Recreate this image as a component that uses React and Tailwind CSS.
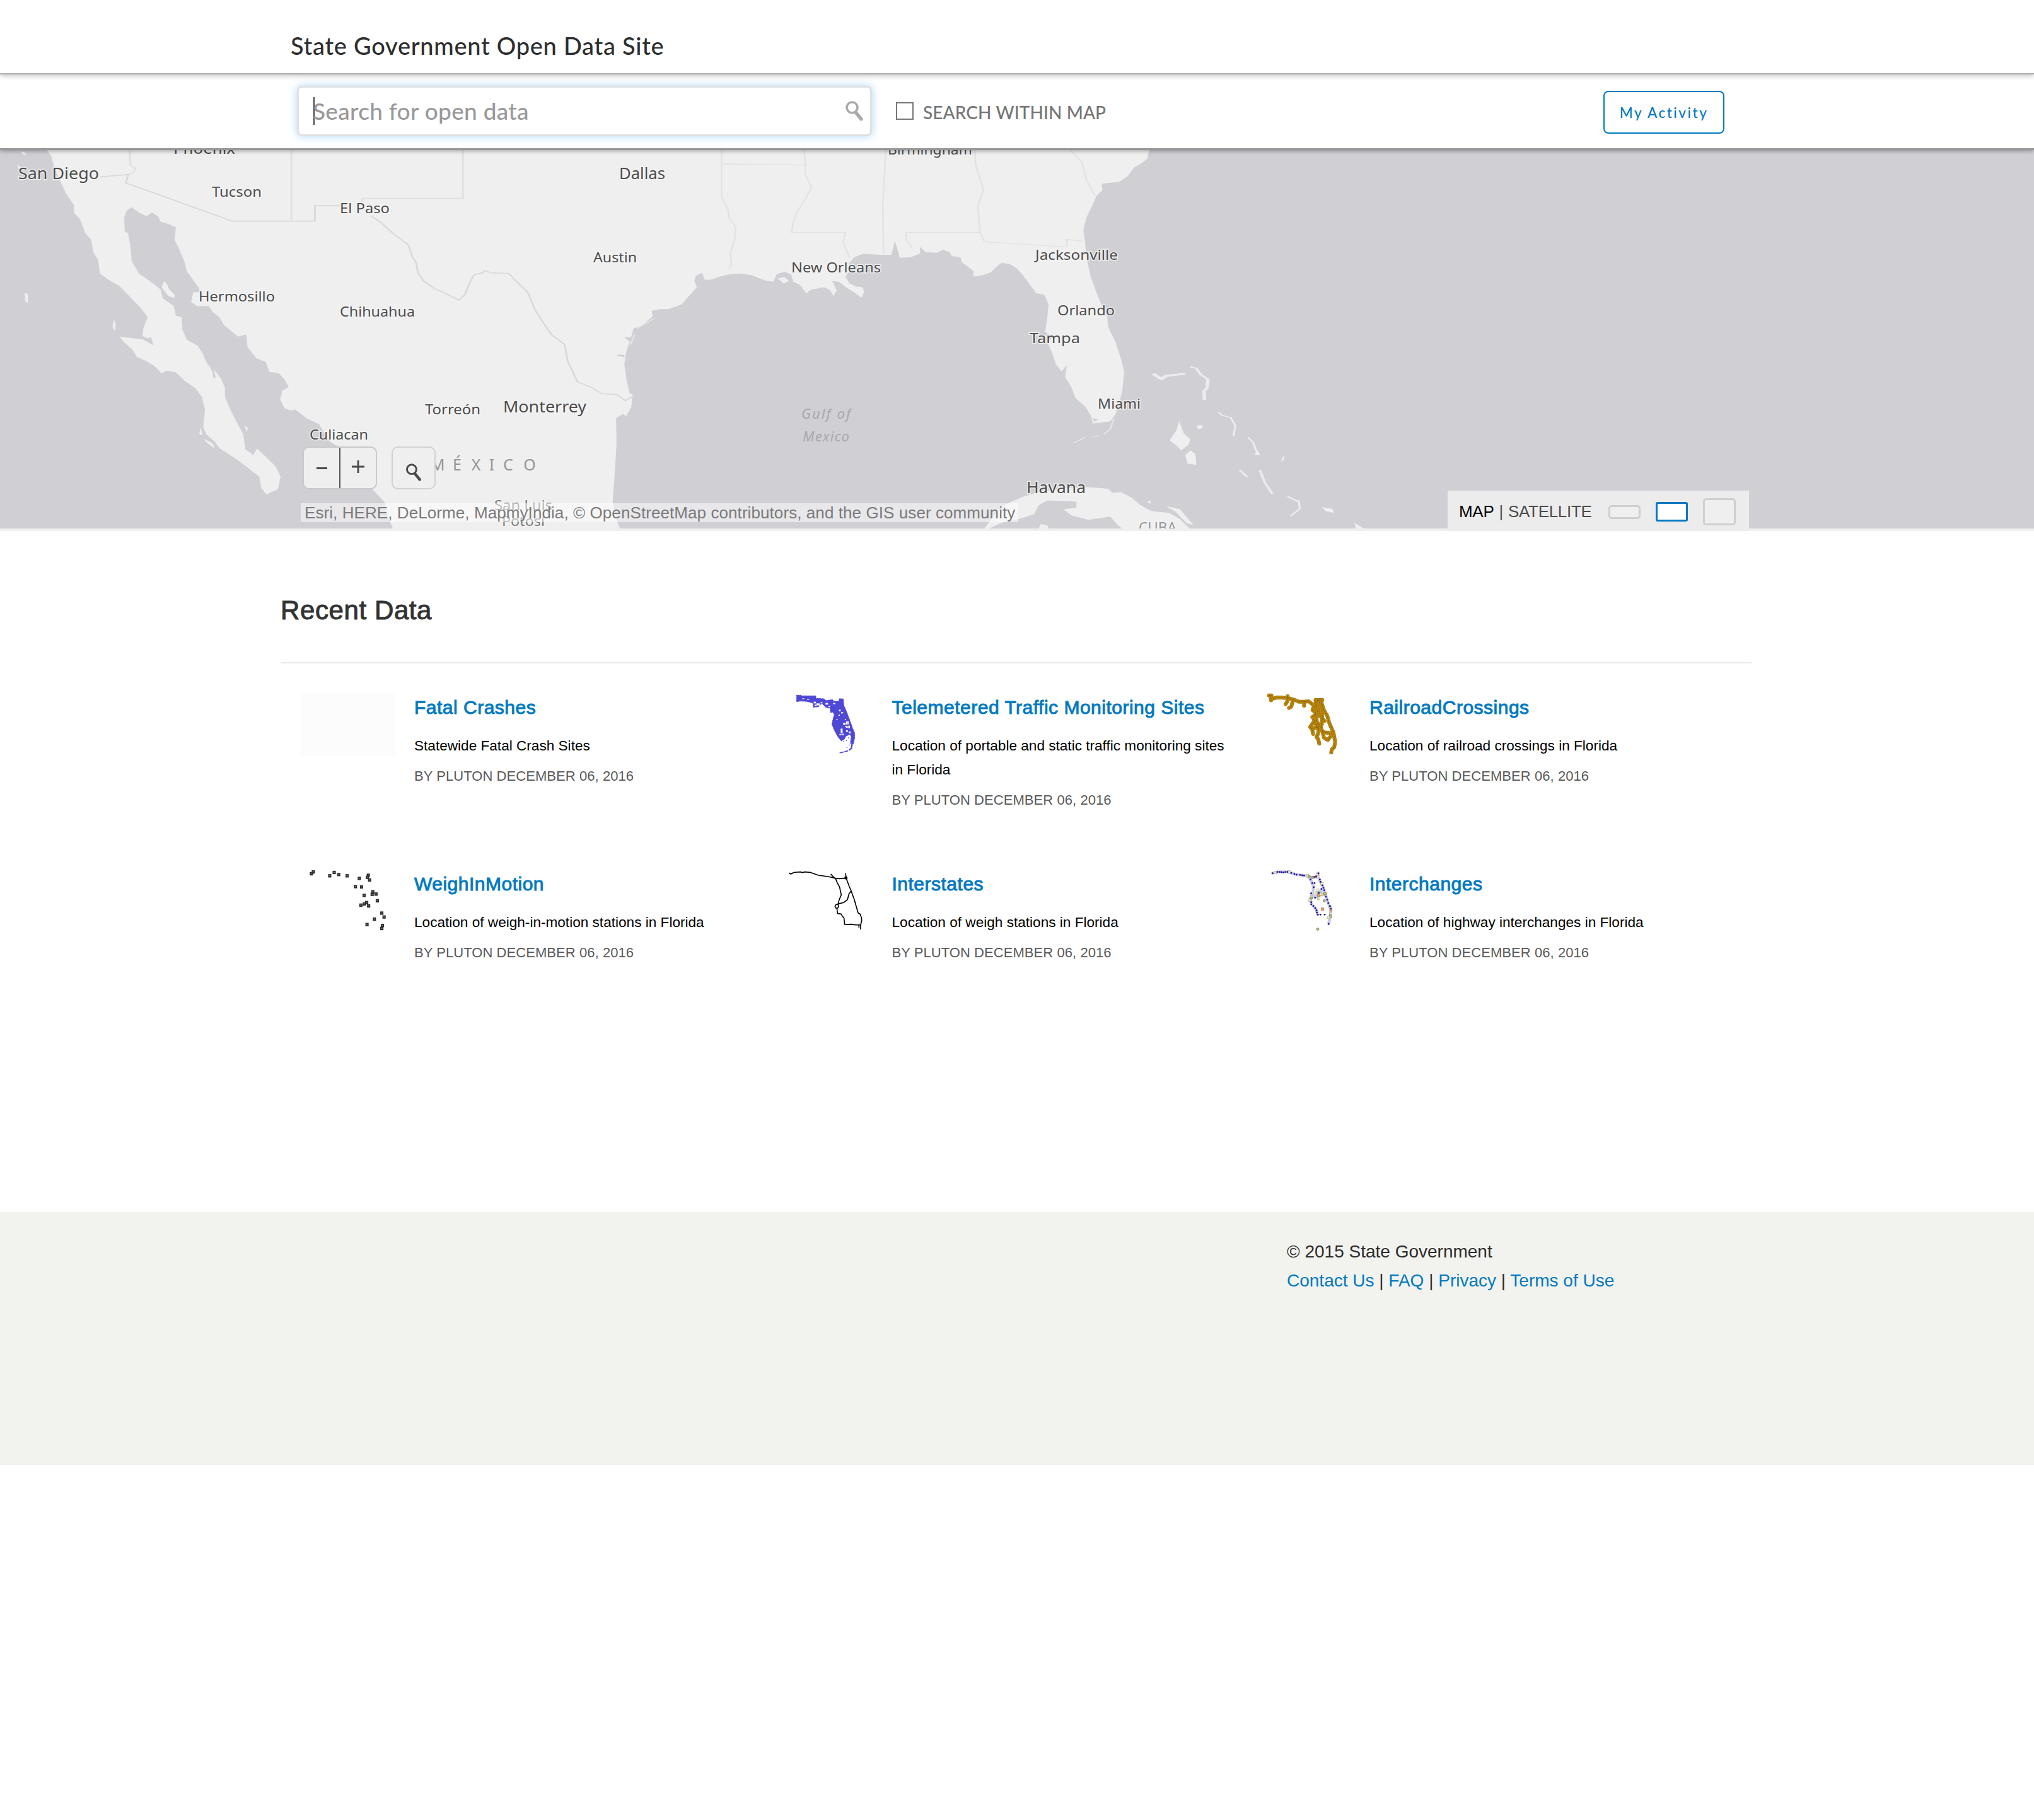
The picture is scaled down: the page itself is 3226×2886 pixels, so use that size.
import React from "react";

const CARDS = [
  { title: "Fatal Crashes", text: "Statewide Fatal Crash Sites", thumb: "blank" },
  { title: "Telemetered Traffic Monitoring Sites", text: "Location of portable and static traffic monitoring sites in Florida", thumb: "traffic" },
  { title: "RailroadCrossings", text: "Location of railroad crossings in Florida", thumb: "rail" },
  { title: "WeighInMotion", text: "Location of weigh-in-motion stations in Florida", thumb: "weigh" },
  { title: "Interstates", text: "Location of weigh stations in Florida", thumb: "interstates" },
  { title: "Interchanges", text: "Location of highway interchanges in Florida", thumb: "interchanges" },
];

// label, left, right, baseline, font size
const CITIES = [
  ["San Diego", 29, 157, 284, 26],
  ["Phoenix", 275, 373, 244, 25],
  ["Tucson", 336, 415, 312, 22],
  ["El Paso", 539, 618, 338, 22],
  ["Dallas", 982, 1055, 284, 26],
  ["Austin", 941, 1010, 416, 22],
  ["Hermosillo", 315, 436, 478, 22],
  ["Chihuahua", 539, 658, 502, 22],
  ["Torreón", 674, 762, 657, 22],
  ["Monterrey", 798, 930, 654, 26],
  ["Culiacan", 491, 584, 697, 22],
  ["Birmingham", 1408, 1542, 245, 22],
  ["New Orleans", 1255, 1397, 432, 22],
  ["Jacksonville", 1642, 1773, 412, 22],
  ["Orlando", 1677, 1768, 500, 22],
  ["Tampa", 1633, 1713, 544, 22],
  ["Miami", 1741, 1809, 648, 22],
  ["Havana", 1628, 1722, 782, 25],
];

const FADED = [
  ["San Luis", 784, 876, 809, 22, "#777777"],
  ["Potosí", 796, 864, 834, 22, "#777777"],
  ["CUBA", 1806, 1866, 844, 21, "#97979b"],
];

const WEIGH = [
  [125, 1140], [131, 1133], [182, 1148], [196, 1135], [210, 1143], [236, 1148], [274, 1158], [302, 1146], [299, 1154],
  [306, 1164], [262, 1190], [281, 1191], [316, 1210], [314, 1220], [326, 1219], [289, 1224], [330, 1245], [290, 1257],
  [297, 1252], [279, 1262], [303, 1265], [344, 1293], [351, 1308], [321, 1316], [298, 1337], [346, 1341], [344, 1353],
];

const JUNCTIONS = [
  [115, 914], [138, 908], [148, 908], [157, 909], [167, 910], [176, 908], [186, 908], [204, 913], [219, 918], [229, 921],
  [246, 922], [256, 924], [265, 925], [295, 944], [304, 961], [315, 961], [311, 981], [313, 932], [322, 930], [333, 915],
  [340, 944], [343, 955], [352, 972], [357, 984], [347, 989], [361, 995], [335, 1007], [299, 1010], [318, 1030], [369, 1026],
  [375, 1040], [380, 1056], [388, 1071], [299, 1052], [299, 1062], [309, 1070], [318, 1080], [324, 1090], [326, 1101],
  [330, 1111], [343, 1111], [363, 1111], [392, 1083], [382, 1155],
];

const YELLOW = [
  [127, 910], [194, 908], [280, 925], [328, 918], [350, 965], [330, 995], [322, 1008], [345, 1012], [356, 1016], [300, 1028],
  [291, 1042], [334, 1035], [387, 1072], [381, 1125], [391, 1108],
];

const HOLES = [
  [182, 98, 10, 8], [194, 106, 16, 10], [186, 112, 8, 8], [127, 82, 10, 4], [150, 86, 10, 3], [215, 100, 8, 6], [238, 104, 12, 8],
  [252, 118, 8, 6], [274, 104, 10, 6], [302, 136, 8, 8], [312, 148, 10, 6], [300, 160, 6, 5], [310, 226, 9, 22], [322, 198, 12, 10],
  [336, 192, 12, 14], [330, 214, 14, 8], [346, 212, 8, 12], [336, 234, 8, 8], [348, 240, 10, 8], [304, 252, 10, 5], [290, 180, 5, 6],
  [330, 180, 6, 5], [318, 250, 6, 8],
];

function Thumb({ kind }) {
  if (kind === "blank") return <div className="h-[100px] w-[150px] bg-[#fcfcfc]" />;
  if (kind === "weigh")
    return (
      <svg className="block h-[100px] w-[150px]" viewBox="92 1124.5 294 245" preserveAspectRatio="none">
        {WEIGH.map(([x, y], i) => (
          <g key={i}>
            <rect x={x - 5} y={y - 6} width="10" height="13" fill="#2b2b2b" />
            <rect x={x - 2} y={y - 1.5} width="4" height="3" fill="#8a8a8a" />
          </g>
        ))}
      </svg>
    );
  if (kind === "traffic")
    return (
      <svg className="block h-[100px] w-[150px]" viewBox="15 57 450 300">
        <path
          d="M100 67H122V70H192V82L230 84 240 92 272 88 276 96H302L303 83 323 85 325 115 340 150 355 190 367 225 376 245 377 270 370 300 356 296 360 262 352 254 335 262 328 276 312 285 295 262 280 235 268 205 275 175 280 160 272 148 262 150 260 130 240 125 222 108 212 112 206 122 180 125 178 105 150 97 120 95 100 98Z"
          fill="#4f48d6" stroke="#4f48d6" strokeWidth="3" strokeDasharray="5 3"
        />
        <path d="M366 290 361 320 350 329" fill="none" stroke="#4f48d6" strokeWidth="7" />
        <path d="M345 332 328 336M324 337 305 342" fill="none" stroke="#4f48d6" strokeWidth="5" />
        {HOLES.map(([x, y, w, h], i) => (
          <rect key={i} x={x} y={y} width={w} height={h} fill="#fff" />
        ))}
        <path d="M322 286h5M336 284h4M345 270h5M338 316h4M348 304h5M190 110h5M330 220h6M341 200h4M316 232h3" stroke="#5a52e0" strokeWidth="4" />
      </svg>
    );
  if (kind === "rail") {
    const d =
      "M98 68H110M104 70 108 92M110 85 135 78 186 80 215 88 240 98 265 98 287 96 310 115M187 72 186 95 177 110M212 90 204 122 193 128M265 98V118M319 90H352M330 90 322 115 308 128 305 138 320 150 316 164 304 171M335 90 342 120 336 145 345 170 362 190M320 100 332 165M348 100 352 190M320 160 325 185 308 198 294 218 304 232 308 252M325 190 335 215 332 250 324 266 333 278 337 298M345 95 360 140 375 165 385 200 405 245 413 290 408 315 397 325 394 340M310 180 335 235M350 185 345 225 356 243 395 248M352 240 360 270 378 280 392 262M320 205H350M305 225 345 215";
    return (
      <svg className="block h-[100px] w-[150px] overflow-visible" viewBox="36 57 450 300" fill="none" strokeLinecap="round" strokeLinejoin="round">
        <path d={d} stroke="#a2770c" strokeWidth="18" />
        <path d={d} stroke="#bb880a" strokeWidth="14" />
        <path d={d} stroke="#7a5a10" strokeWidth="3.5" strokeDasharray="2 7" />
      </svg>
    );
  }
  if (kind === "interstates")
    return (
      <svg className="block h-[100px] w-[150px] overflow-visible" viewBox="15 897 450 300" fill="none" stroke="#000" strokeWidth="5" strokeLinejoin="round">
        <path d="M64 913 73 918 85 911 103 909 118 908 128 911 140 908 165 910 185 917 205 924 250 930 285 938 305 940 335 937" />
        <path d="M263 918 275 932 286 940 293 958 305 980 309 1000 313 1017 303 1040 298 1060" />
        <path d="M333 914 337 940 350 975 360 998 375 1040 393 1103 402 1108 409 1125 410 1140 405 1160 405 1181" />
        <path d="M360 998 350 1012 342 1040 325 1053 300 1060 288 1063 283 1072 287 1080 296 1080 300 1072 297 1062" />
        <path d="M292 1080 295 1105 312 1108 318 1118 326 1128 329 1158 360 1157 380 1160 405 1160M397 1160V1173" />
        <circle cx="335" cy="936" r="5" fill="#000" />
      </svg>
    );
  return (
    <svg className="block h-[100px] w-[150px] overflow-visible" viewBox="36 897 450 300">
      <path
        d="M115 914 140 908 190 908 220 918 270 926 295 935 333 932M333 912V935L352 972 365 1010 380 1056 393 1085 390 1115 382 1155M290 930 311 980 305 1010 295 1035 300 1060 322 1085 330 1111M360 990 335 1005 318 1030 300 1010M365 1015 330 1020"
        fill="none" stroke="#c3c3e0" strokeWidth="14" strokeLinejoin="round" strokeLinecap="round" opacity=".85"
      />
      {YELLOW.map(([x, y], i) => (
        <rect key={i} x={x - 6} y={y - 6} width="12" height="12" fill="#e6efba" stroke="#8f9474" strokeWidth="1.4" />
      ))}
      {JUNCTIONS.map(([x, y], i) => (
        <circle key={i} cx={x} cy={y} r="4.2" fill="#2016a0" />
      ))}
      <g fill="#b5b77c" stroke="#5d5f40" strokeWidth="1.8">
        <circle cx="289" cy="929" r="6" />
        <circle cx="305" cy="934" r="6" />
        <circle cx="361" cy="1045" r="6" />
        <circle cx="300" cy="1032" r="6" />
        <circle cx="330" cy="1180" r="6" />
        <rect x="359" y="1005" width="12" height="12" />
        <path d="M385 1112h11v14h-6z" fillOpacity=".5" />
      </g>
      <circle cx="322" cy="930" r="5" fill="#a01c30" />
      <g fill="#e8935f" stroke="#a86a50" strokeWidth="1.6">
        <rect x="328" y="1013" width="12" height="12" />
        <rect x="347" y="1079" width="12" height="12" />
        <rect x="387" y="1086" width="10" height="9" />
      </g>
    </svg>
  );
}

function MapLabel({ item, fill }) {
  const [t, x0, x1, y, size] = item;
  return (
    <text x={x0} y={y} fontSize={size} textLength={x1 - x0} lengthAdjust="spacingAndGlyphs" fill={fill} stroke="#f6f6f6" strokeOpacity=".8" strokeWidth="3" paintOrder="stroke">
      {t}
    </text>
  );
}

function MapArt() {
  return (
    <svg className="block h-[600px] w-[3226px]" viewBox="0 238 3226 600" fontFamily="'Noto Sans', sans-serif">
      <rect x="0" y="236" width="3226" height="602" fill="#d0cfd4" />
      <g transform="translate(0 230) scale(.68878 .39541)" fill="#efefef">
        <path d="M100 0 108 20 118 45 125 90 140 150 152 195 170 240 170 270 185 300 197 355 210 380 215 430 226 460 230 515 250 540 275 565 300 610 325 655 340 690 330 735 328 765 340 775 348 770 353 803 330 780 275 768 285 790 305 820 315 850 335 865 355 885 372 915 385 905 405 912 425 945 450 975 465 1010 472 1060 468 1130 475 1160 495 1190 505 1215 545 1260 575 1300 597 1330 602 1375 613 1402 640 1380 646 1330 635 1290 615 1255 592 1217 583 1243 565 1220 560 1160 545 1110 530 1060 518 1010 518 975 510 940 495 905 485 890 478 880 465 830 455 805 430 780 420 740 418 690 405 685 400 645 375 615 370 580 345 545 320 515 303 465 300 400 295 355 287 345 286 290 292 262 303 250 320 270 337 285 350 270 365 288 370 308 385 315 405 330 402 380 412 415 425 470 430 505 440 530 457 570 462 590 445 590 440 630 455 647 480 645 490 670 505 690 515 720 535 750 548 768 567 760 570 810 590 855 612 870 620 910 642 915 655 940 665 970 650 985 645 1020 655 1055 670 1065 680 1060 705 1095 735 1120 745 1150 760 1190 785 1215 830 1320 860 1385 885 1430 895 1500 908 1550H1340V0Z" />
        <path d="M378 545 385 560 390 580 402 600 402 614 388 606 372 570Z" />
        <path d="M57 592 64 598 64 635 58 625ZM262 698 267 720 264 745 259 730ZM48 25 58 30 60 42 52 36ZM40 75 48 90 42 95Z" />
        <path d="M563 1125 571 1135 568 1152ZM462 1130 466 1165 459 1158ZM470 1178 490 1196 495 1218 474 1190Z" />
        <path d="M485 890 491 905 494 935" fill="none" stroke="#d0cfd4" strokeWidth="5" />
      </g>
      <g transform="translate(900 230) scale(.68878 .39541)" fill="#efefef">
        <path d="M-5 0V1550H124L112 1500 104 1430 108 1340 113 1200 112 1095 128 1078 135 1088 147 1050 150 1000 143 995 136 940 131 880 135 830 145 780 152 735 170 725 185 703 196 688 194 665 210 658 232 658 262 640 280 605 298 570 292 545 296 525 310 512 316 540 330 540 350 528 375 518 400 515 425 522 455 543 474 548 482 518 500 508 515 520 520 548 535 560 550 595 560 580 592 570 605 582 612 605 620 585 610 545 625 548 645 575 660 590 677 612 683 590 680 570 665 568 650 555 640 530 650 500 648 475 660 450 680 436 720 440 746 440 754 385 762 430 765 452 790 450 812 435 812 408 825 430 850 432 865 420 880 430 885 445 905 450 908 470 920 485 935 505 935 527 955 523 975 510 990 485 1000 472 1020 478 1035 495 1050 525 1065 560 1080 595 1098 600 1108 640 1105 690 1100 750 1118 770 1105 790 1115 830 1125 880 1138 908 1150 882 1146 930 1160 970 1170 1015 1193 1050 1205 1085 1210 1117 1250 1108 1262 1080 1270 1040 1278 980 1282 910 1275 860 1262 790 1245 730 1243 690 1232 650 1220 600 1205 530 1195 450 1192 390 1188 340 1195 290 1208 245 1218 205 1232 180 1230 155 1270 148 1290 125 1305 90 1320 75 1335 55 1342 0Z" />
        <path d="M955 1550 985 1480 1010 1440 1050 1410 1090 1390 1150 1375 1200 1372 1245 1378 1255 1395 1275 1392 1300 1415 1320 1445 1345 1468 1385 1475 1410 1500 1440 1550H1285L1265 1520 1250 1490 1200 1503 1160 1485 1142 1460 1172 1455 1172 1430 1105 1425 1085 1445 1075 1480 1040 1500 1000 1515Z" />
        <path d="M1083 1545 1090 1520 1105 1525 1110 1545ZM1378 1448 1410 1460 1442 1525 1425 1515 1400 1470Z" />
        <path d="M155 760 145 800M160 735 200 695M1258 1098 1250 1140 1235 1160" fill="none" stroke="#e4e4e6" strokeWidth="4" />
        <path d="M484 535 500 530 510 545 498 556Z" />
        <path d="M130 768 148 772 144 790ZM115 840 132 842 130 850 115 846ZM1208 1095 1222 1100 1214 1110Z" fill="#d0cfd4" />
        <g fill="none" stroke="#e2e2e2" strokeWidth="3.5">
          <path d="M355 20V210L370 260 372 290 388 330 385 380 375 430 378 480 372 495M358 76 545 80" />
          <path d="M545 20 548 80 548 120 562 170 548 215 530 265 520 310 516 350H640L635 390 645 430 650 455" />
          <path d="M733 20 726 240 728 435M938 20 940 80 958 180 945 245 950 350H780V380L795 415" />
          <path d="M950 350 960 388 1145 408M1150 410V378L1185 385M1158 20 1185 70 1195 140 1215 205" />
        </g>
      </g>
      <g transform="translate(0 230) scale(.68878 .39541)" fill="none" stroke="#d9d9d9" strokeWidth="4">
        <path d="M298 20 300 80 312 95 308 112 295 118" stroke="#e0e0e0" />
        <path d="M671 20V305M1066 20V214H835L830 240" stroke="#e0e0e0" />
        <path d="M230 128 295 118 290 152 535 305H725V243H785" />
        <path d="M855 285 880 315 905 355 940 400 950 450 958 470 962 510 975 545 1000 575 1020 590 1057 622 1070 600 1085 540 1092 520 1110 513 1117 503 1130 512 1172 515 1185 540 1215 590 1232 660 1250 710 1270 760 1300 800 1308 870 1330 950 1360 970 1385 997 1420 1000 1440 1025 1455 1010" />
      </g>
      <g transform="translate(1560 500) scale(.80357 .33333)" fill="#efefef">
        <path d="M386 503 395 560 408 590 405 615 390 642 378 615 367 595 380 550ZM408 643 418 660 420 712 402 705 398 665ZM420 525 432 522 432 536 424 542Z" />
        <path d="M540 640 546 662 535 665ZM592 665 594 685 587 697ZM668 913 688 920 692 940 675 932ZM732 988 752 1016H735ZM322 888 330 882 330 896Z" />
        <g fill="none" stroke="#ececee" strokeLinejoin="round">
          <path d="M335 278 351 303 360 288 398 278" strokeWidth="9" />
          <path d="M408 245 420 252 428 280 443 305" strokeWidth="6" />
          <path d="M443 305 441 345 435 362 436 402" strokeWidth="7" />
          <path d="M463 460 470 475 488 488 497 525 493 575M522 580 532 605 540 655" strokeWidth="4" />
          <path d="M505 735 520 768M600 862 622 888M545 735 555 795 570 850" strokeWidth="5" />
          <path d="M622 880 624 920 606 955" strokeWidth="4" />
          <path d="M228 572 215 580M200 582 178 606" strokeWidth="3" />
        </g>
      </g>
      {CITIES.map((c) => (
        <MapLabel key={c[0]} item={c} fill="#4c4c4c" />
      ))}
      {FADED.map((c) => (
        <MapLabel key={c[0]} item={c} fill={c[5]} />
      ))}
      <text y="746" fontSize="25" fill="#959595" textAnchor="middle" x="694 725 755 780 806 840">MÉXICO</text>
      <g fontSize="22" fontStyle="italic" fill="#a9a8ad">
        <text x="1271" y="664" textLength="78">Gulf of</text>
        <text x="1273" y="700" textLength="74">Mexico</text>
      </g>
    </svg>
  );
}

function Glass({ className, stroke, width }) {
  return (
    <svg className={className} viewBox="0 0 28 32" fill="none" stroke={stroke} strokeLinecap="round">
      <circle cx="10.5" cy="10.5" r="8.5" strokeWidth={width} />
      <path d="M16.5 18.5 25 29" strokeWidth={width + 1.8} />
    </svg>
  );
}

function Card({ title, text, thumb }) {
  return (
    <article className="flex h-[280px] gap-[30px]">
      <div className="shrink-0">
        <Thumb kind={thumb} />
      </div>
      <div className="w-[542px] pt-[3px]">
        <h3 className="text-[30px] leading-10 tracking-[0.5px] whitespace-nowrap text-[#0079c1] [-webkit-text-stroke:0.9px_#0079c1]">{title}</h3>
        <p className="mt-[22px] text-[22.6px] leading-[38px] text-black">{text}</p>
        <p className="mt-[10px] text-[22px] leading-[38px] tracking-[0.06px] text-[#595959]">BY PLUTON DECEMBER 06, 2016</p>
      </div>
    </article>
  );
}

export default function App() {
  return (
    <div className="h-[2886px] w-[3226px] overflow-hidden bg-white font-['Liberation_Sans',Arial,sans-serif]">
      <header className="relative z-20 h-[118px] border-b-2 border-[#adadad] bg-white pl-[461px] shadow-[0_2px_8px_rgba(0,0,0,0.25)]">
        <h1 className="pt-[47px] font-['Lato',sans-serif] text-[38px] leading-[50px] font-medium tracking-[0.72px] text-[#2e2e2e]">State Government Open Data Site</h1>
      </header>

      <div className="relative z-10 flex h-[120px] items-start border-b-3 border-[#979797] bg-white pl-[471px] font-['Lato',sans-serif] shadow-[0_2px_6px_rgba(0,0,0,0.3)]">
        <div className="mt-[18px] flex h-[80px] w-[912px] items-center rounded-lg border-3 border-[#e1e1e3] bg-white pr-[11px] pl-[23px] shadow-[0_0_14px_rgba(120,190,245,0.6)]">
          <div className="-mr-[3px] h-11 w-[2px] bg-[#444]" />
          <div className="text-[37px] leading-[48px] font-medium tracking-[0.3px] text-[#999]">Search for open data</div>
          <Glass className="ml-auto h-8 w-7" stroke="#a9a9a9" width={3.6} />
        </div>
        <div className="mt-[44px] ml-[38px] h-7 w-7 border-2 border-[#777]" />
        <div className="mt-[41px] ml-[15px] text-[28px] leading-[38px] font-medium tracking-[0.1px] whitespace-nowrap text-[#757575]">SEARCH WITHIN MAP</div>
        <div className="mt-[26px] mr-[491px] ml-auto flex h-[68px] w-[192px] items-center justify-center rounded-lg border-2 border-[#0079c1] pt-[2px] text-[22.5px] font-medium tracking-[2.5px] text-[#0079c1]">
          My Activity
        </div>
      </div>

      <section className="relative h-[604px] border-b-4 border-[#efefef] bg-[#d0cfd4]">
        <MapArt />
        <div className="absolute top-[470px] left-[480px] flex gap-[23px]">
          <div className="flex h-[68px] w-[118px] rounded-[10px] border-2 border-[#c9c9c9] bg-[#efefef]">
            <div className="flex w-[58px] items-center justify-center border-r-2 border-[#555]">
              <div className="h-[3px] w-[17px] bg-[#4a4a4a]" />
            </div>
            <div className="flex flex-1 items-center justify-center pb-1">
              <svg className="h-5 w-5" viewBox="0 0 20 20" stroke="#4a4a4a" strokeWidth="2.8">
                <path d="M0 10H20M10 0V20" />
              </svg>
            </div>
          </div>
          <div className="h-[68px] w-[70px] rounded-[10px] border-2 border-[#d2d2d2] bg-[#efefef] pt-[25px] pl-[20px]">
            <Glass className="h-[28px] w-[26px]" stroke="#4a4a4a" width={3.4} />
          </div>
        </div>
        <div className="absolute top-[560px] left-[477px] h-[30px] w-[1138px] bg-white/50 pl-[6px] text-[26px] leading-[30px] tracking-[0.08px] whitespace-nowrap text-[#7b7b7b]">
          Esri, HERE, DeLorme, MapmyIndia, © OpenStreetMap contributors, and the GIS user community
        </div>
        <div className="absolute right-[452px] bottom-[-4px] flex h-[64px] w-[478px] items-center bg-[#ececec] pt-[3px] pl-[18px] text-[26px] tracking-[-0.3px] whitespace-nowrap text-[#4c4c4c]">
          <span className="text-black">MAP</span>
          <span className="mx-[8px]">|</span>
          <span>SATELLITE</span>
          <div className="ml-[26px] h-[22px] w-[51px] rounded-[5px] border-3 border-[#cfcfcf] bg-[#efefef]" />
          <div className="ml-[24px] h-[31px] w-[51px] rounded-[3px] border-3 border-[#0079c1] bg-white" />
          <div className="ml-[24px] h-[43px] w-[52px] rounded-[5px] border-3 border-[#cfcfcf] bg-[#efefef]" />
        </div>
      </section>

      <main className="ml-[445px] h-[1080px] w-[2333px] pt-[90px]">
        <h2 className="h-[120px] border-b-[2px] border-[#e9e9e9] pt-[9px] text-[42px] leading-[54px] tracking-[0.6px] text-[#333] [-webkit-text-stroke:1px_#333]">Recent Data</h2>
        <div className="grid grid-cols-[757.5px_757.5px_757.5px] pt-[47px] pl-[32px]">
          {CARDS.map((c) => (
            <Card key={c.title} {...c} />
          ))}
        </div>
      </main>

      <footer className="h-[401px] bg-[#f2f2ee] pt-[40px] pl-[2041px] text-[28px] leading-[46px] text-[#2c2c2c]">
        <p>© 2015 State Government</p>
        <p className="whitespace-nowrap">
          <a className="text-[#0079c1]">Contact Us</a> | <a className="text-[#0079c1]">FAQ</a> | <a className="text-[#0079c1]">Privacy</a> | <a className="text-[#0079c1]">Terms of Use</a>
        </p>
      </footer>
    </div>
  );
}
